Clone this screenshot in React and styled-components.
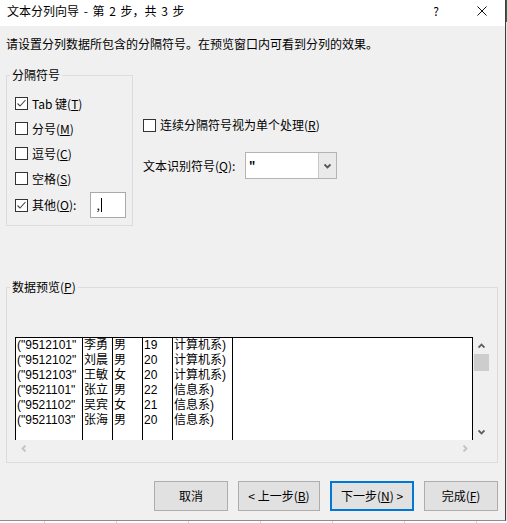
import React from "react";
import styled, { createGlobalStyle } from "styled-components";

const GlobalStyle = createGlobalStyle`
  html, body {
    margin: 0;
    padding: 0;
    background: #fff;
  }
  body {
    font-family: "Noto Sans CJK SC", "Noto Sans", sans-serif;
    font-size: 12px;
    color: #000;
  }
`;

const rows = [
  ['("9512101"', "李勇", "男", "19", "计算机系)"],
  ['("9512102"', "刘晨", "男", "20", "计算机系)"],
  ['("9512103"', "王敏", "女", "20", "计算机系)"],
  ['("9521101"', "张立", "男", "22", "信息系)"],
  ['("9521102"', "吴宾", "女", "21", "信息系)"],
  ['("9521103"', "张海", "男", "20", "信息系)"],
];

const columnWidths = [67, 30, 30, 30, 60];

function CheckMark() {
  return (
    <svg width="11" height="11" viewBox="0 0 11 11">
      <polyline points="1.5,5.5 4,8 9.5,2" fill="none" stroke="#444" strokeWidth="1.1" />
    </svg>
  );
}

function Chevron({ dir, color = "#606060" }) {
  const pts = {
    up: "0.5,4.5 3.5,1.5 6.5,4.5",
    down: "0.5,1.5 3.5,4.5 6.5,1.5",
    left: "4.5,0.5 1.5,3.5 4.5,6.5",
    right: "1.5,0.5 4.5,3.5 1.5,6.5",
  }[dir];
  const vertical = dir === "up" || dir === "down";
  return (
    <svg width={vertical ? 7 : 6} height={vertical ? 6 : 7} viewBox={vertical ? "0 0 7 6" : "0 0 6 7"}>
      <polyline points={pts} fill="none" stroke={color} strokeWidth="1.8" />
    </svg>
  );
}

function Check({ label, checked, tall, children }) {
  return (
    <CheckRow tall={tall}>
      <Box>{checked && <CheckMark />}</Box>
      <span>{label}</span>
      {children}
    </CheckRow>
  );
}

export default function App() {
  return (
    <>
      <GlobalStyle />
      <Window>
        <TopRow>
          <Dialog>
            <TitleBar>
              <Title>文本分列向导 - 第 2 步，共 3 步</Title>
              <Help>?</Help>
              <Close>
                <svg width="10" height="10" viewBox="0 0 10 10">
                  <path d="M0.5 0.5 L9.5 9.5 M9.5 0.5 L0.5 9.5" stroke="#111" strokeWidth="1" />
                </svg>
              </Close>
            </TitleBar>
            <Body>
              <Instruction>请设置分列数据所包含的分隔符号。在预览窗口内可看到分列的效果。</Instruction>
              <OptionsRow>
                <SeparatorBox>
                  <GroupLabel>分隔符号</GroupLabel>
                  <Check checked label={<>Tab 键(<u>T</u>)</>} />
                  <Check label={<>分号(<u>M</u>)</>} />
                  <Check label={<>逗号(<u>C</u>)</>} />
                  <Check label={<>空格(<u>S</u>)</>} />
                  <Check checked tall label={<>其他(<u>O</u>):</>}>
                    <OtherInput>
                      ,<Caret />
                    </OtherInput>
                  </Check>
                </SeparatorBox>
                <RightColumn>
                  <ConsecutiveRow>
                    <Box />
                    <span>
                      连续分隔符号视为单个处理(<u>R</u>)
                    </span>
                  </ConsecutiveRow>
                  <QualifierRow>
                    <QualifierLabel>
                      文本识别符号(<u>Q</u>):
                    </QualifierLabel>
                    <Select>
                      <SelectValue>"</SelectValue>
                      <SelectArrow>
                        <Chevron dir="down" color="#555" />
                      </SelectArrow>
                    </Select>
                  </QualifierRow>
                </RightColumn>
              </OptionsRow>
              <PreviewBox>
                <GroupLabel>
                  数据预览(<u>P</u>)
                </GroupLabel>
                <PreviewGrid>
                  <DataArea>
                    {columnWidths.map((w, ci) => (
                      <Column key={ci} width={w}>
                        {rows.map((r, ri) => (
                          <Cell key={ri}>{r[ci]}</Cell>
                        ))}
                      </Column>
                    ))}
                  </DataArea>
                  <VScroll>
                    <ScrollButton>
                      <Chevron dir="up" />
                    </ScrollButton>
                    <Thumb />
                    <ScrollSpacer />
                    <ScrollButton>
                      <Chevron dir="down" />
                    </ScrollButton>
                  </VScroll>
                  <HScroll>
                    <Chevron dir="left" color="#c2c2c2" />
                    <Chevron dir="right" color="#c2c2c2" />
                  </HScroll>
                  <Corner />
                </PreviewGrid>
              </PreviewBox>
              <ButtonRow>
                <Button width={74}>取消</Button>
                <Button width={82}>
                  &lt; 上一步(<u>B</u>)
                </Button>
                <Button width={84} primary>
                  下一步(<u>N</u>) &gt;
                </Button>
                <Button width={74}>
                  完成(<u>F</u>)
                </Button>
              </ButtonRow>
            </Body>
          </Dialog>
          <SideStrip />
        </TopRow>
        <BottomStrip />
      </Window>
    </>
  );
}

const Window = styled.div`
  width: 507px;
  height: 523px;
  display: flex;
  flex-direction: column;
  overflow: hidden;
`;

const TopRow = styled.div`
  display: flex;
  height: 521px;
`;

const Dialog = styled.div`
  width: 505px;
  height: 520px;
  flex: none;
  background: #f0f0f0;
  border-right: 1px solid #3f3f3f;
  border-bottom: 1px solid #8c8c8c;
  display: flex;
  flex-direction: column;
`;

const SideStrip = styled.div`
  flex: 1;
  background: linear-gradient(#1f6e43 0 22px, #e4e4e4 22px);
`;

const BottomStrip = styled.div`
  height: 2px;
  background: repeating-linear-gradient(90deg, transparent 0 71px, #d4d4d4 71px 72px) #fff;
  background-position-x: -27px;
`;

const TitleBar = styled.div`
  height: 26px;
  box-sizing: border-box;
  background: #fff;
  display: flex;
  align-items: flex-start;
  padding: 3px 18px 0 7px;
  line-height: 16px;
`;

const Title = styled.div`
  flex: 1;
  word-spacing: 2px;
`;

const Help = styled.span`
  margin-right: 38px;
`;

const Close = styled.span`
  display: flex;
  margin-top: 3px;
`;

const Body = styled.div`
  flex: 1;
  display: flex;
  flex-direction: column;
  padding: 10px 7px 8px 6px;
`;

const Instruction = styled.div`
  line-height: 16px;
`;

const OptionsRow = styled.div`
  display: flex;
  align-items: flex-start;
  gap: 10px;
  margin-top: 23px;
`;

const GroupBox = styled.div`
  position: relative;
  border: 1px solid #dcdcdc;
  box-sizing: border-box;
`;

const GroupLabel = styled.span`
  position: absolute;
  top: -9px;
  left: 3px;
  padding: 0 2px;
  background: #f0f0f0;
  line-height: 16px;
`;

const SeparatorBox = styled(GroupBox)`
  width: 127px;
  padding: 15px 0 6px 8px;
`;

const CheckRow = styled.div`
  display: flex;
  align-items: center;
  gap: 4px;
  height: ${(p) => (p.tall ? 28 : 25)}px;
  line-height: 16px;
`;

const Box = styled.span`
  width: 13px;
  height: 13px;
  flex: none;
  box-sizing: border-box;
  border: 1px solid #333;
  background: #fff;
  display: flex;
  align-items: center;
  justify-content: center;
`;

const OtherInput = styled.span`
  width: 36px;
  height: 26px;
  box-sizing: border-box;
  margin-left: 10px;
  border: 1px solid #a9a9a9;
  background: #fff;
  display: flex;
  align-items: center;
  padding-left: 5px;
  line-height: 16px;
`;

const Caret = styled.span`
  width: 1px;
  height: 14px;
  background: #000;
  margin-left: 1px;
`;

const RightColumn = styled.div`
  display: flex;
  flex-direction: column;
  padding-top: 40px;
`;

const ConsecutiveRow = styled.div`
  display: flex;
  align-items: center;
  gap: 4px;
  height: 20px;
  line-height: 16px;
`;

const QualifierRow = styled.div`
  display: flex;
  align-items: center;
  height: 27px;
  margin-top: 17px;
`;

const QualifierLabel = styled.span`
  width: 102px;
  line-height: 16px;
`;

const Select = styled.div`
  width: 92px;
  height: 27px;
  box-sizing: border-box;
  border: 1px solid #b4b4b4;
  background: #fff;
  display: flex;
`;

const SelectValue = styled.span`
  flex: 1;
  padding: 4px 0 0 3px;
  line-height: 16px;
  font-size: 11px;
  font-weight: bold;
`;

const SelectArrow = styled.span`
  width: 17px;
  border-left: 1px solid #c8c8c8;
  background: #eaeaea;
  display: flex;
  align-items: center;
  justify-content: center;
`;

const PreviewBox = styled(GroupBox)`
  margin-top: 61px;
  padding: 49px 7px 5px 8px;
`;

const PreviewGrid = styled.div`
  display: grid;
  grid-template-columns: 458px 16px;
  grid-template-rows: 103px 17px;
`;

const DataArea = styled.div`
  box-sizing: border-box;
  border: 1px solid #000;
  border-bottom: none;
  background: #fff;
  display: flex;
  overflow: hidden;
`;

const Column = styled.div`
  width: ${(p) => p.width}px;
  flex: none;
  box-sizing: border-box;
  border-right: 1px solid #000;
  overflow: hidden;
`;

const Cell = styled.div`
  height: 15px;
  line-height: 15px;
  white-space: nowrap;
  font-family: "Liberation Sans", "Noto Sans CJK SC", sans-serif;
  font-size: 12px;
  padding-left: 1px;
`;

const VScroll = styled.div`
  display: flex;
  flex-direction: column;
  background: #f0f0f0;
`;

const ScrollButton = styled.div`
  height: 17px;
  display: flex;
  align-items: center;
  justify-content: center;
`;

const Thumb = styled.div`
  height: 17px;
  margin-left: 1px;
  background: #cdcdcd;
`;

const ScrollSpacer = styled.div`
  flex: 1;
`;

const HScroll = styled.div`
  display: flex;
  align-items: center;
  justify-content: space-between;
  padding: 0 5px 0 6px;
`;

const Corner = styled.div``;

const ButtonRow = styled.div`
  display: flex;
  justify-content: flex-end;
  gap: 10px;
  margin-top: 18px;
`;

const Button = styled.button`
  width: ${(p) => p.width}px;
  height: 30px;
  box-sizing: border-box;
  padding: 0;
  border: ${(p) => (p.primary ? "2px solid #0078d7" : "1px solid #adadad")};
  background: #e1e1e1;
  font-family: "Noto Sans CJK SC", sans-serif;
  font-size: 12px;
  color: #000;
  line-height: 16px;
`;
